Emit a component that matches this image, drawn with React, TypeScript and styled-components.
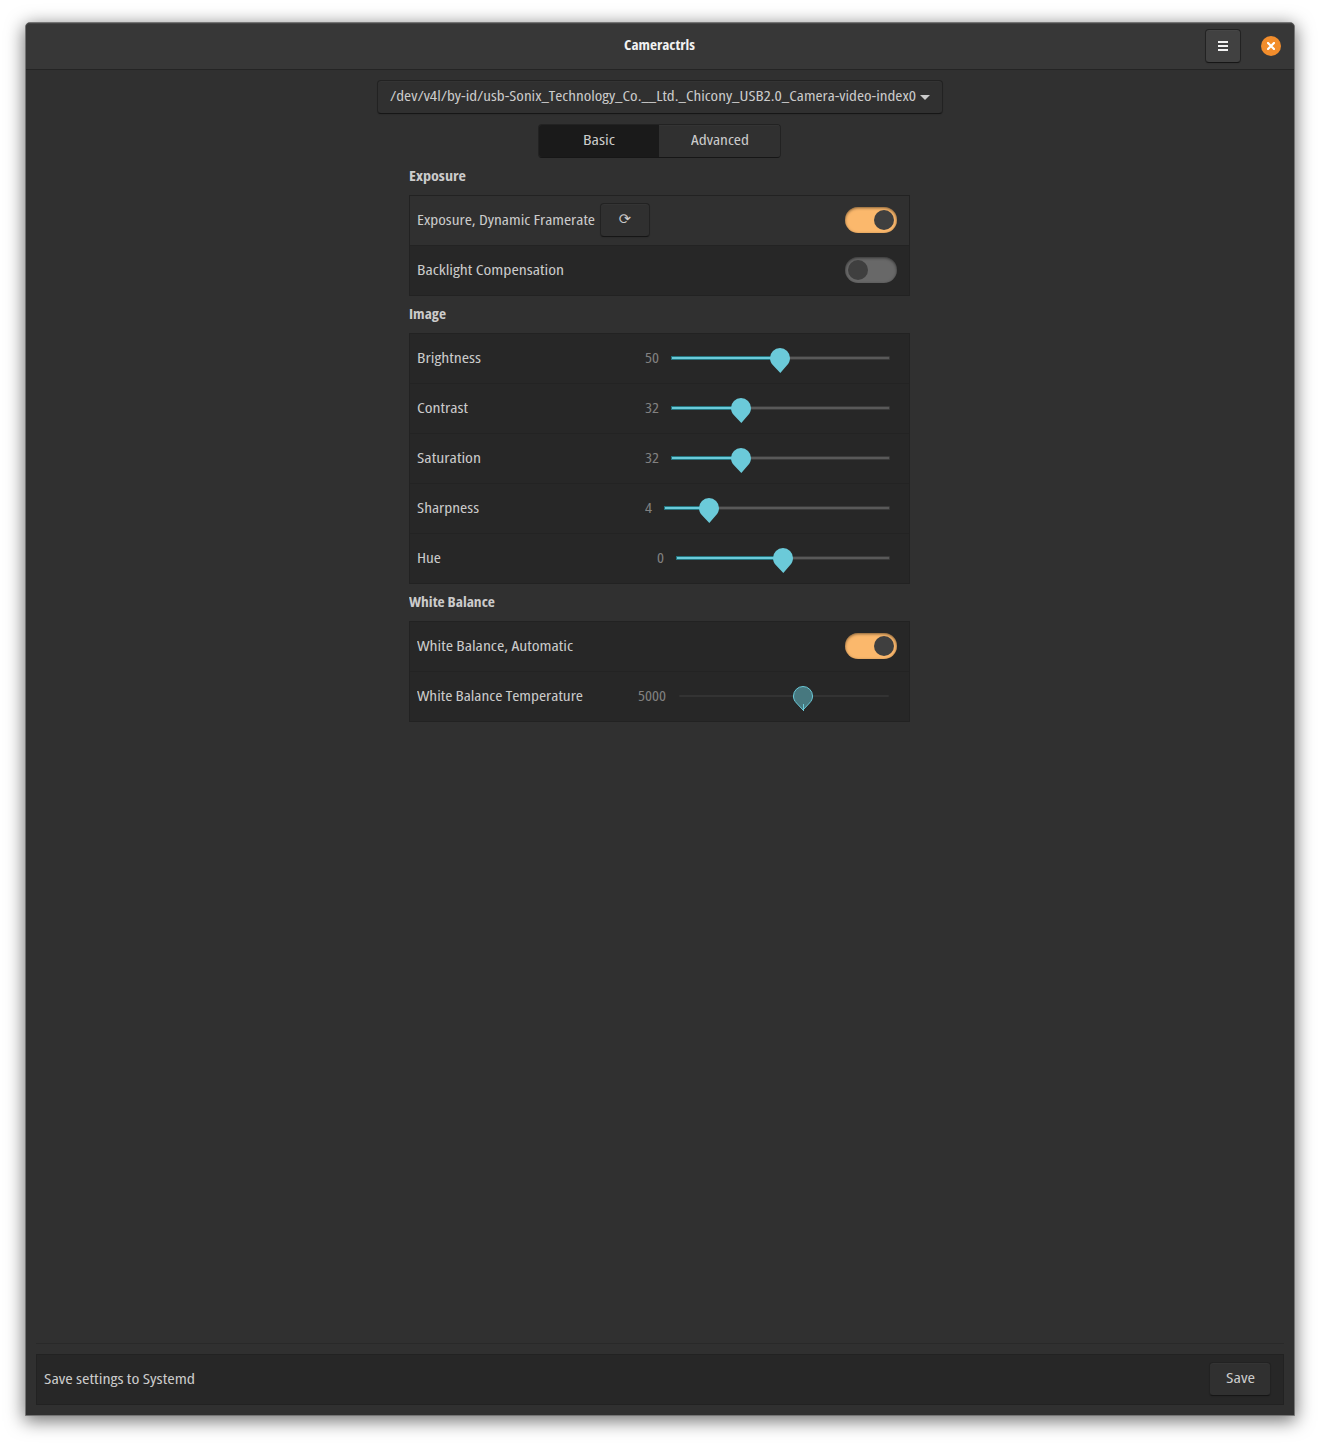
import React, { useLayoutEffect, useRef } from 'react';
import styled, { createGlobalStyle, css } from 'styled-components';

const GlobalStyle = createGlobalStyle`
  * { box-sizing: border-box; }
  body {
    margin: 0;
    background: #fff;
    color: #cbcbcb;
    font-family: "Open Sans", "Noto Sans", sans-serif;
    font-size: 14px;
    line-height: 20px;
  }
`;

/* ---------- condensed text ---------- */

const TextBox = styled.span<{ $width: number }>`
  display: block;
  flex: none;
  width: ${p => p.$width}px;
  height: 20px;
  text-align: left;
  white-space: nowrap;
`;

const TextInner = styled.span`
  display: inline-block;
  font-stretch: 80%;
  transform-origin: 0 50%;
`;

function Text({ width, children }: { width: number; children: string }) {
  const ref = useRef<HTMLSpanElement>(null);
  useLayoutEffect(() => {
    const el = ref.current;
    if (!el) return;
    el.style.transform = 'none';
    const natural = el.getBoundingClientRect().width;
    el.style.transform = `scaleX(${width / natural})`;
  }, [width, children]);
  return (
    <TextBox $width={width}>
      <TextInner ref={ref}>{children}</TextInner>
    </TextBox>
  );
}

/* ---------- window ---------- */

const Desktop = styled.div`
  height: 1444px;
  padding: 22px 25px 28px;
  overflow: hidden;
`;

const Window = styled.div`
  height: 1394px;
  display: flex;
  flex-direction: column;
  border: 1px solid #747474;
  border-radius: 5px 5px 0 0;
  background: #303030;
  box-shadow: 0 4px 18px 1px rgba(0, 0, 0, 0.55);
`;

const HeaderBar = styled.header`
  height: 47px;
  display: grid;
  grid-template-columns: 1fr auto 1fr;
  align-items: center;
  padding: 0 13px 1px;
  background: #373737;
  border-bottom: 1px solid #242424;
  border-radius: 4px 4px 0 0;
  box-shadow: inset 0 1px #464646;
`;

const Title = styled.h1`
  grid-column: 2;
  margin: 0;
  padding: 0 1px 1px 0;
  font-size: 14px;
  font-weight: 700;
  color: #f2f2f2;
`;

const HeaderActions = styled.div`
  display: flex;
  justify-content: flex-end;
  align-items: center;
  gap: 20px;
`;

const Button = styled.button<{ $width: number; $raised?: boolean }>`
  width: ${p => p.$width}px;
  height: 34px;
  flex: none;
  display: flex;
  align-items: center;
  justify-content: center;
  gap: 4px;
  padding: 0 0 2px;
  border: 1px solid #222;
  border-bottom-color: #161616;
  border-radius: 4px;
  background: ${p => (p.$raised ? '#414141' : '#303030')};
  color: inherit;
  font: inherit;
  box-shadow: inset 0 1px ${p => (p.$raised ? '#464646' : '#343434')}, 0 1px 1px rgba(0, 0, 0, 0.08);
`;

const ResetGlyph = styled.span`
  font-family: "DejaVu Sans", sans-serif;
  font-size: 14.67px;
  line-height: 20px;
`;

const CloseButton = styled.button`
  width: 20px;
  height: 20px;
  display: grid;
  place-items: center;
  padding: 0;
  border: 0;
  border-radius: 50%;
  background: #f28d2c;
`;

const Content = styled.main`
  flex: 1;
  display: flex;
  flex-direction: column;
  align-items: center;
  gap: 10px;
  padding-top: 10px;
`;

const Switcher = styled.div`
  width: 243px;
  height: 34px;
  display: flex;
  margin-right: 1px;
  border: 1px solid #222;
  border-bottom-color: #161616;
  border-radius: 4px;
  overflow: hidden;
`;

const Tab = styled.button<{ $active?: boolean }>`
  flex: ${p => (p.$active ? '0 0 120px' : '1')};
  display: flex;
  align-items: center;
  justify-content: center;
  padding: 0 0 2px;
  border: 0;
  background: ${p => (p.$active ? '#1a1a1a' : '#303030')};
  box-shadow: ${p => (p.$active ? 'none' : 'inset 0 1px #343434')};
  color: inherit;
  font: inherit;
`;

const Page = styled.div`
  width: 501px;
  margin: -10px 1px 0 0;
`;

const GroupTitle = styled.h2`
  height: 37px;
  display: flex;
  align-items: center;
  margin: 0;
  padding-bottom: 1px;
  font-size: 14px;
  font-weight: 700;
`;

const List = styled.div`
  border: 1px solid #222;
  background: #272727;
`;

const Row = styled.div<{ $hover?: boolean }>`
  height: 50px;
  display: flex;
  align-items: center;
  gap: 5px;
  padding: 0 12px 1px 7px;
  border-bottom: 1px solid #232323;
  background: ${p => (p.$hover ? '#303030' : 'transparent')};
  &:last-child { height: 49px; border-bottom: 0; }
`;

const Spacer = styled.div`
  flex: 1;
`;

/* ---------- switch ---------- */

const SwitchTrack = styled.div<{ $on?: boolean }>`
  width: 52px;
  height: 26px;
  display: flex;
  justify-content: ${p => (p.$on ? 'flex-end' : 'flex-start')};
  padding: 3px;
  border-radius: 13px;
  background: ${p => (p.$on ? '#fbb86c' : '#686868')};
  box-shadow: inset 0 1px 3px rgba(0, 0, 0, 0.5);
`;

const SwitchKnob = styled.div`
  width: 20px;
  height: 20px;
  border-radius: 50%;
  background: #3f3f3f;
`;

function Switch({ on }: { on?: boolean }) {
  return <SwitchTrack $on={on}><SwitchKnob /></SwitchTrack>;
}

/* ---------- slider ---------- */

const ValueLabel = styled.div<{ $gap: number }>`
  color: #818181;
  margin-right: ${p => p.$gap - 5}px;
`;

const Scale = styled.div<{ $width: number; $inset: number }>`
  position: relative;
  flex: none;
  width: ${p => p.$width}px;
  height: 30px;
  margin-right: ${p => p.$inset}px;
  display: flex;
  align-items: center;
`;

const Trough = styled.div<{ $disabled?: boolean }>`
  width: 100%;
  height: 4px;
  border: 1px solid #3a3a3a;
  border-radius: 1px;
  background: #595959;
  ${p => p.$disabled && css`
    height: 2px;
    border: 0;
    background: #333;
  `}
`;

const Fill = styled.div`
  height: 4px;
  margin: -1px;
  border: 1px solid #23757f;
  background: #6bcad9;
`;

const Knob = styled.svg`
  position: absolute;
  top: 5px;
  width: 20px;
  height: 26px;
`;

interface SliderProps {
  value: string;
  textWidth: number;
  gap: number;
  width: number;
  knob: number;
  disabled?: boolean;
}

function Slider({ value, textWidth, gap, width, knob, disabled }: SliderProps) {
  return (
    <>
      <ValueLabel $gap={gap}><Text width={textWidth}>{value}</Text></ValueLabel>
      <Scale $width={width} $inset={disabled ? 8 : 7}>
        <Trough $disabled={disabled}>
          {!disabled && <Fill style={{ width: knob }} />}
        </Trough>
        <Knob viewBox="0 0 20 26" style={{ left: knob - 10 }}>
          {disabled ? (
            <>
              <path d="M10 .5A9.500 9.500 0 0 0 .5 10c0 3 1.100 5 3 7l6.500 7 6.500-7c1.900-2 3-4 3-7A9.500 9.500 0 0 0 10 .5Z" fill="#47787f" stroke="#6bcad9" />
              <path d="M10.500 18v7" stroke="#6bcad9" />
            </>
          ) : (
            <path d="M10 0A10 10 0 0 0 0 10c0 3 1.100 5.300 3 7.200l7.300 7.800 6.700-7.800c1.900-2 3-4.200 3-7.200A10 10 0 0 0 10 0Z" fill="#6bcad9" />
          )}
        </Knob>
      </Scale>
    </>
  );
}

/* ---------- footer ---------- */

const Footer = styled.footer`
  margin: 0 10px 10px;
  padding-top: 10px;
  border-top: 1px solid #292929;
`;

const SaveBar = styled.div`
  height: 51px;
  display: flex;
  align-items: center;
  justify-content: space-between;
  padding: 0 12px 1px 7px;
  border: 1px solid #222;
  background: #272727;
`;

const imageControls = [
  { name: 'Brightness', nameWidth: 64, value: '50', textWidth: 14, gap: 12, width: 219, knob: 109 },
  { name: 'Contrast', nameWidth: 51, value: '32', textWidth: 14, gap: 12, width: 219, knob: 70 },
  { name: 'Saturation', nameWidth: 64, value: '32', textWidth: 14, gap: 12, width: 219, knob: 70 },
  { name: 'Sharpness', nameWidth: 62, value: '4', textWidth: 7, gap: 12, width: 226, knob: 45 },
  { name: 'Hue', nameWidth: 24, value: '0', textWidth: 7, gap: 12, width: 214, knob: 107 },
];

export default function App() {
  return (
    <Desktop>
      <GlobalStyle />
      <Window>
        <HeaderBar>
          <Title><Text width={71}>Cameractrls</Text></Title>
          <HeaderActions>
            <Button $width={36} $raised aria-label="Menu">
              <svg width="10" height="10" viewBox="0 0 10 10" style={{ marginTop: 2 }}>
                <path d="M0 0h10v2H0zM0 4h10v2H0zM0 8h10v2H0z" fill="#f2f2f2" />
              </svg>
            </Button>
            <CloseButton aria-label="Close">
              <svg width="8" height="8" viewBox="0 0 8 8">
                <path d="M1 1l6 6M7 1L1 7" stroke="#fff" strokeWidth="2.200" strokeLinecap="square" />
              </svg>
            </CloseButton>
          </HeaderActions>
        </HeaderBar>

        <Content>
          <Button $width={566}>
            <Text width={526}>/dev/v4l/by-id/usb-Sonix_Technology_Co.__Ltd._Chicony_USB2.0_Camera-video-index0</Text>
            <svg width="10" height="5" viewBox="0 0 10 5" style={{ marginTop: 3 }}>
              <path d="M0 0h10L5 5z" fill="#cbcbcb" />
            </svg>
          </Button>
          <Switcher>
            <Tab $active><Text width={32}>Basic</Text></Tab>
            <Tab><Text width={58}>Advanced</Text></Tab>
          </Switcher>
          <Page>
            <GroupTitle><Text width={57}>Exposure</Text></GroupTitle>
            <List>
              <Row $hover>
                <Text width={178}>Exposure, Dynamic Framerate</Text>
                <Button $width={50} aria-label="Reset">
                  <ResetGlyph>⟳</ResetGlyph>
                </Button>
                <Spacer />
                <Switch on />
              </Row>
              <Row>
                <Text width={147}>Backlight Compensation</Text>
                <Spacer />
                <Switch />
              </Row>
            </List>

            <GroupTitle><Text width={37}>Image</Text></GroupTitle>
            <List>
              {imageControls.map(({ name, nameWidth, ...slider }) => (
                <Row key={name}>
                  <Text width={nameWidth}>{name}</Text>
                  <Spacer />
                  <Slider {...slider} />
                </Row>
              ))}
            </List>

            <GroupTitle><Text width={86}>White Balance</Text></GroupTitle>
            <List>
              <Row>
                <Text width={156}>White Balance, Automatic</Text>
                <Spacer />
                <Switch on />
              </Row>
              <Row>
                <Text width={166}>White Balance Temperature</Text>
                <Spacer />
                <Slider value="5000" textWidth={28} gap={13} width={210} knob={124} disabled />
              </Row>
            </List>
          </Page>
        </Content>

        <Footer>
          <SaveBar>
            <Text width={151}>Save settings to Systemd</Text>
            <Button $width={62}><Text width={29}>Save</Text></Button>
          </SaveBar>
        </Footer>
      </Window>
    </Desktop>
  );
}
